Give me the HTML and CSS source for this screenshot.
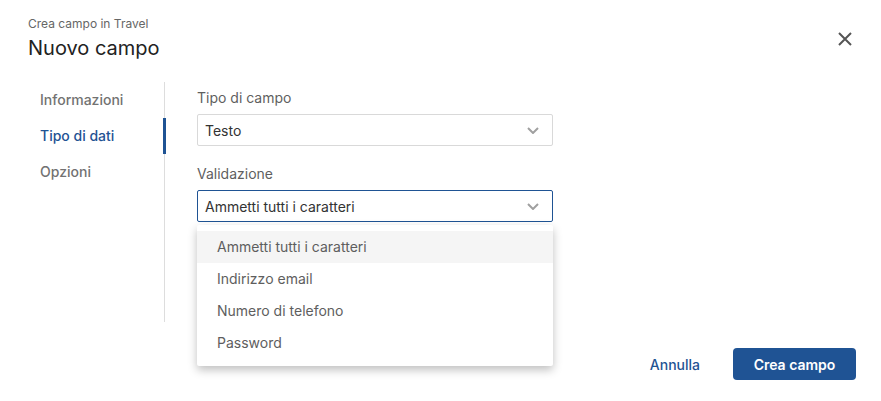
FILE: index.html
```html
<!DOCTYPE html>
<html lang="it">
<head>
<meta charset="utf-8">
<title>Nuovo campo</title>
<link rel="stylesheet" href="styles.css">
</head>
<body>
<div class="dialog">
  <header class="header">
    <div class="titles">
      <div class="subtitle">Crea campo in Travel</div>
      <h1 class="title">Nuovo campo</h1>
    </div>
    <button class="close" aria-label="Chiudi">
      <svg width="14" height="14" viewBox="0 0 14 14"><path d="M1 1L13 13M13 1L1 13" stroke="#555" stroke-width="2" fill="none"/></svg>
    </button>
  </header>
  <div class="body">
    <nav class="nav">
      <div class="nav-item">Informazioni</div>
      <div class="nav-item active">Tipo di dati</div>
      <div class="nav-item">Opzioni</div>
    </nav>
    <div class="content">
      <div class="field">
        <div class="label">Tipo di campo</div>
        <div class="select">
          <span>Testo</span>
          <svg class="chev" width="12" height="7" viewBox="0 0 12 7"><path d="M1 1L6 6L11 1" stroke="#a0a0a0" stroke-width="2" fill="none"/></svg>
        </div>
      </div>
      <div class="field">
        <div class="label">Validazione</div>
        <div class="select-wrap">
          <div class="select focused">
            <span>Ammetti tutti i caratteri</span>
            <svg class="chev" width="12" height="7" viewBox="0 0 12 7"><path d="M1 1L6 6L11 1" stroke="#a0a0a0" stroke-width="2" fill="none"/></svg>
          </div>
          <ul class="menu">
            <li class="opt hl">Ammetti tutti i caratteri</li>
            <li class="opt">Indirizzo email</li>
            <li class="opt">Numero di telefono</li>
            <li class="opt">Password</li>
          </ul>
        </div>
      </div>
    </div>
  </div>
  <footer class="footer">
    <button class="btn-link">Annulla</button>
    <button class="btn-primary">Crea campo</button>
  </footer>
</div>
</body>
</html>
```
FILE: styles.css
```css
* { box-sizing: border-box; }
html, body { margin: 0; padding: 0; background: #fff; }
body { font-family: Inter, "Noto Sans", sans-serif; color: #333; }

.dialog { width: 881px; height: 401px; }

.header {
  display: flex;
  align-items: center;
  justify-content: space-between;
  padding: 16px 29px 0 28px;
}
.subtitle { font-size: 12px; line-height: 16px; color: #666; }
.title { margin: 2px 0 0; font-size: 20px; line-height: 28px; font-weight: 400; color: #222; }
.close { border: 0; background: none; padding: 0; width: 14px; height: 14px; display: flex; cursor: pointer; }

.body { display: flex; height: 240px; margin-top: 20px; }
.nav { width: 165px; border-right: 1px solid #ddd; }
.nav-item {
  height: 36px; line-height: 36px; padding-left: 40px;
  font-size: 14px; color: #727272; font-weight: 500;
  margin-right: -1px;
}
.nav-item.active { color: #1f5394; border-right: 3px solid #1f5394; margin-right: -2px; }

.content { padding: 6px 0 0 32px; }
.field { margin-bottom: 18px; }
.label { font-size: 14px; line-height: 20px; color: #5f5f5f; margin-bottom: 6px; }
.select-wrap { position: relative; }
.select {
  width: 356px; height: 32px;
  border: 1px solid #d9d9d9; border-radius: 2px;
  display: flex; align-items: center; justify-content: space-between;
  padding: 0 13px 0 7px;
  font-size: 14px; color: #333;
}
.select.focused { border-color: #1f5394; }
.chev { display: block; }

.menu {
  position: absolute; left: 0; top: 35px; z-index: 2;
  width: 356px; margin: 0; padding: 6px 0 7px; list-style: none;
  background: #fff; border-radius: 2px;
  box-shadow: 0 4px 10px rgba(0,0,0,0.25);
}
.opt { height: 32px; line-height: 32px; padding-left: 20px; font-size: 14px; color: #5e5e5e; }
.opt.hl { background: #f5f5f5; }

.footer {
  display: flex; justify-content: flex-end; align-items: center;
  margin-top: 26px; padding-right: 25px;
}
.btn-link {
  border: 0; background: none; font-family: inherit; font-size: 14px; font-weight: 500;
  color: #1f5394; padding: 0; margin-right: 33px; height: 32px;
}
.btn-primary {
  width: 123px; height: 32px; border: 0; border-radius: 4px;
  background: #1f5394; color: #fff; font-family: inherit;
  font-size: 14px; font-weight: 600;
}
```
